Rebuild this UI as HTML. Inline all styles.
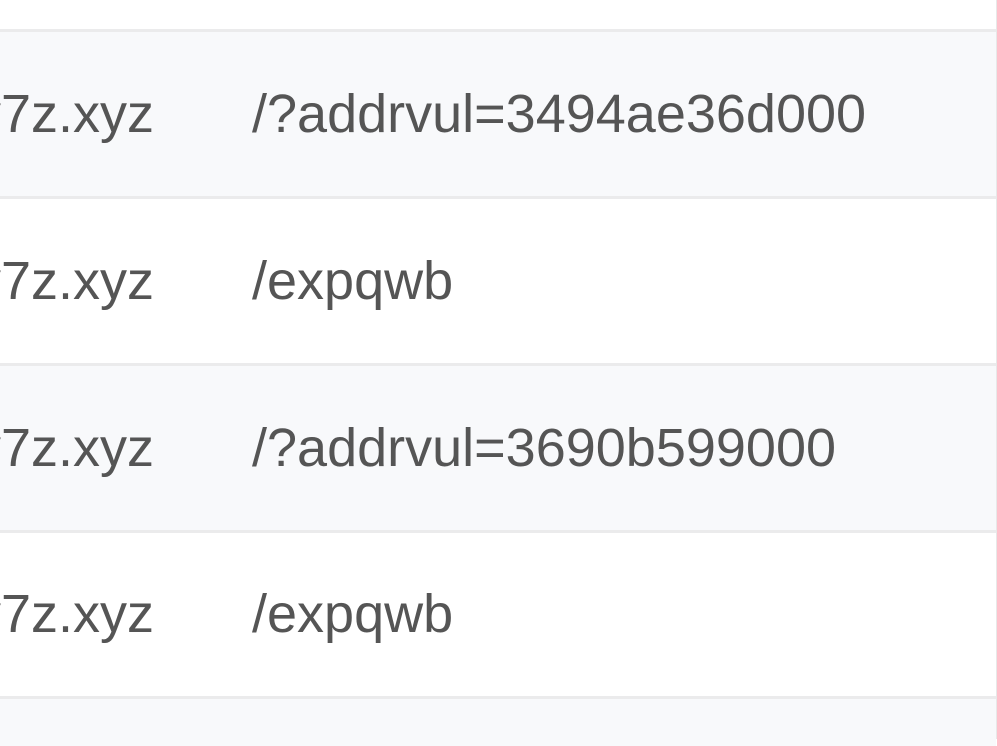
<!DOCTYPE html>
<html><head><meta charset="utf-8"><style>
body{margin:0;width:997px;height:739px;overflow:hidden;background:#fff;position:relative;font-family:"Liberation Sans",sans-serif;}
.r{position:absolute;left:0;width:996px;border-top:3px solid #ebebec;box-sizing:border-box}
.g{background:#f8f9fb}
.t{position:absolute;font-size:54px;line-height:54px;color:#555;white-space:nowrap}
.a{right:843px}
.b{left:252px}
.edge{position:absolute;left:996px;top:0;width:1px;height:739px;background:#e8e8e8}
</style></head><body>
<div class="r g" style="top:29px;height:168px"></div>
<div class="r" style="top:196px;height:168px"></div>
<div class="r g" style="top:363px;height:168px"></div>
<div class="r" style="top:530px;height:168px"></div>
<div class="r g" style="top:696px;height:50px"></div>
<div class="edge"></div>
<div class="t a" style="top:87px">v7z.xyz</div><div class="t b" style="top:87px">/?addrvul=3494ae36d000</div>
<div class="t a" style="top:254px">v7z.xyz</div><div class="t b" style="top:254px">/expqwb</div>
<div class="t a" style="top:421px">v7z.xyz</div><div class="t b" style="top:421px">/?addrvul=3690b599000</div>
<div class="t a" style="top:587px">v7z.xyz</div><div class="t b" style="top:587px">/expqwb</div>
</body></html>
